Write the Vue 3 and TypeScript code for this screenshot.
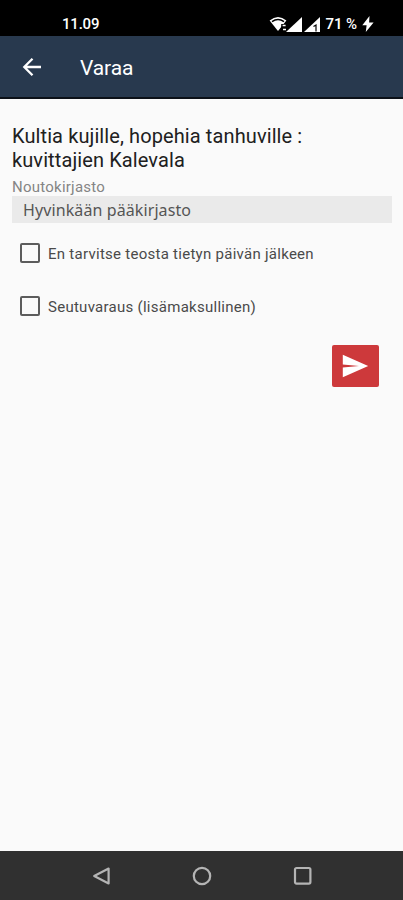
<script setup lang="ts">
import { ref } from 'vue'

interface Option {
  id: string
  label: string
  checked: boolean
}

const title = 'Kultia kujille, hopehia tanhuville : kuvittajien Kalevala'
const library = ref('Hyvinkään pääkirjasto')
const options = ref<Option[]>([
  { id: 'expiry', label: 'En tarvitse teosta tietyn päivän jälkeen', checked: false },
  { id: 'regional', label: 'Seutuvaraus (lisämaksullinen)', checked: false },
])
</script>

<template>
  <div class="screen">
    <div class="status">
      <span class="clock">11.09</span>
      <div class="indicators">
        <svg class="wifi" width="18" height="16" viewBox="0 0 18 16">
          <path d="M.6 4.6Q9-2.6 17.4 4.6L9 15Z" fill="#fff" />
          <path d="M3 5.6Q9 1.2 15 5.6" fill="none" stroke="#000" stroke-width="1.5" />
          <path d="M12.2 8h6v8h-6z" fill="#000" />
          <path d="M13.6 9.5h3M14 13.5h3" stroke="#fff" stroke-width="1.4" />
        </svg>
        <svg class="signal" width="16" height="15" viewBox="0 0 16 15">
          <path d="M0 15L16 0V15Z" fill="#fff" />
        </svg>
        <svg class="signal second" width="16" height="15" viewBox="0 0 16 15">
          <path d="M0 15L16 0V15Z" fill="#fff" />
          <path d="M9.5 9.5L12 8v6.5" fill="none" stroke="#000" stroke-width="1.2" />
        </svg>
        <span class="battery">71 %</span>
        <svg class="bolt" width="12" height="16" viewBox="0 0 12 16">
          <path d="M7.5 0L.3 9.2H4.6L3.8 16L11.6 6.5H7.1Z" fill="#fff" />
        </svg>
      </div>
    </div>

    <header class="appbar">
      <button class="back" aria-label="Takaisin">
        <svg width="20" height="20" viewBox="0 0 20 20" fill="none" stroke="#fff" stroke-width="2.3">
          <path d="M19 10H3M10.5 1.8L2.3 10L10.5 18.2" />
        </svg>
      </button>
      <h1>Varaa</h1>
    </header>

    <main class="content">
      <h2 class="title">{{ title }}</h2>
      <div class="caption">Noutokirjasto</div>
      <div class="select">{{ library }}</div>
      <label v-for="option in options" :key="option.id" class="option">
        <input v-model="option.checked" type="checkbox" />
        <span>{{ option.label }}</span>
      </label>
      <button class="send" aria-label="Lähetä">
        <svg width="27" height="24" viewBox="0 0 27 24">
          <path d="M.8 .8L26.2 12L.8 23.2V13.6L17 12L.8 10.4Z" fill="#fff" />
        </svg>
      </button>
    </main>

    <nav class="navbar">
      <svg width="20" height="20" viewBox="0 0 20 20"><path d="M17.6 2.6V17.4L3.2 10Z" /></svg>
      <svg width="20" height="20" viewBox="0 0 20 20"><circle cx="10" cy="10" r="8.2" /></svg>
      <svg width="20" height="20" viewBox="0 0 20 20"><rect x="2" y="2" width="15.4" height="15.6" rx="1.5" /></svg>
    </nav>
  </div>
</template>

<style>
body {
  margin: 0;
  background: #fafafa;
}
</style>

<style scoped>
.screen {
  display: flex;
  flex-direction: column;
  width: 100%;
  height: 900px;
  overflow: hidden;
  background: #fafafa;
  font-family: Roboto, sans-serif;
}
.status {
  display: flex;
  justify-content: space-between;
  flex: none;
  height: 36px;
  padding: 12px 29px 0 62px;
  box-sizing: border-box;
  background: #000;
  color: #fff;
  font-size: 15px;
  font-weight: 500;
  line-height: 24px;
}
.clock {
  letter-spacing: -0.2px;
}
.indicators {
  display: flex;
  height: 24px;
  align-items: center;
}
.wifi {
  margin-right: -1px;
}
.second {
  margin-left: 2px;
}
.battery {
  margin: 0 5px 0 6px;
  letter-spacing: -0.1px;
}
.appbar {
  display: flex;
  flex: none;
  align-items: center;
  height: 63px;
  padding: 1px 22px 0;
  box-sizing: border-box;
  background: #28394e;
  border-bottom: 2px solid #0c1118;
  color: #fff;
}
button {
  display: flex;
  align-items: center;
  justify-content: center;
  padding: 0;
  border: 0;
  background: none;
}
h1 {
  margin: 1px 0 0 38px;
  font-size: 21px;
  font-weight: 400;
  letter-spacing: -0.1px;
  line-height: 30px;
}
.content {
  display: flex;
  flex: 1;
  flex-direction: column;
  padding: 25px 11px 0 12px;
}
.title {
  width: 310px;
  margin: 0;
  color: #202020;
  font-size: 20px;
  font-weight: 400;
  letter-spacing: 0.1px;
  line-height: 24px;
}
.caption {
  height: 24px;
  color: #858585;
  font-size: 15px;
  letter-spacing: 0.24px;
  line-height: 30px;
}
.select {
  height: 27px;
  margin-bottom: 11px;
  padding-left: 11px;
  background: #eaeaea;
  color: #555;
  font-family: "Noto Sans", sans-serif;
  font-size: 16px;
  letter-spacing: 0.1px;
  line-height: 28px;
}
.option {
  display: flex;
  align-items: center;
  gap: 8px;
  height: 38px;
  margin-bottom: 15px;
  padding-left: 8px;
  color: #4a4a4a;
  font-size: 15px;
  letter-spacing: 0.27px;
}
.option span {
  padding-top: 2px;
}
input {
  width: 20px;
  height: 20px;
  margin: 0;
  box-sizing: border-box;
  appearance: none;
  border: 2px solid #5c5c5c;
  border-radius: 2px;
}
.send {
  align-self: flex-end;
  width: 47px;
  height: 42px;
  margin: 5px 13px 0 0;
  border-radius: 2px;
  background: #cd393b;
}
.navbar {
  display: flex;
  flex: none;
  align-items: center;
  justify-content: space-between;
  height: 49px;
  padding: 0 90px 0 91px;
  box-sizing: border-box;
  background: #303030;
}
.navbar svg {
  fill: none;
  stroke: #b4b4b4;
  stroke-width: 2.2;
  stroke-linejoin: round;
}
</style>
